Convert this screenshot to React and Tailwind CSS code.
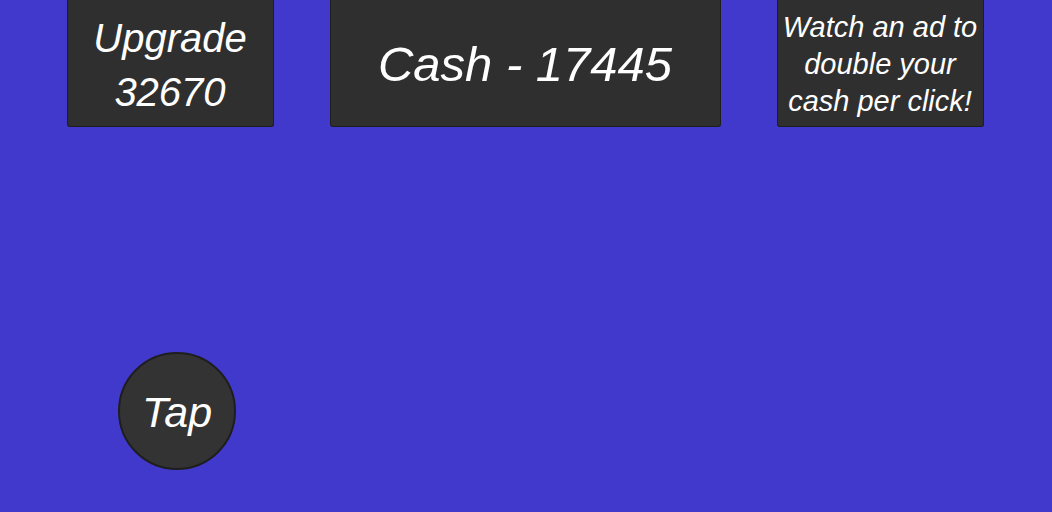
export default function App() {
  const font = { fontFamily: '"Comic Sans MS", "Liberation Sans", "DejaVu Sans", sans-serif' }
  return (
    <div className="h-[512px] w-full overflow-hidden bg-[#4139cc] text-white italic" style={font}>
      <div className="flex justify-center gap-[56px] pr-[2px]">
        <div className="flex h-[127px] w-[207px] flex-col items-center justify-center rounded-b-[3px] border border-t-0 border-[#1e1e1e] bg-[#2f2f2f] pt-[4px] text-[40px] leading-[54px]">
          <span>Upgrade</span>
          <span>32670</span>
        </div>
        <div className="flex h-[127px] w-[391px] items-center justify-center rounded-b-[3px] border border-t-0 border-[#1e1e1e] bg-[#2f2f2f] pt-[3px] text-[49px]">
          Cash - 17445
        </div>
        <div className="flex h-[127px] w-[207px] flex-col items-center justify-center rounded-b-[3px] border border-t-0 border-[#1e1e1e] bg-[#2f2f2f] pt-[2px] text-[29px] leading-[37px]">
          <span>Watch an ad to</span>
          <span>double your</span>
          <span>cash per click!</span>
        </div>
      </div>
      <div className="ml-[118px] mt-[225px] flex h-[118px] w-[118px] items-center justify-center rounded-full border-2 border-[#1e1e1e] bg-[#333333] pt-[2px] text-[43px]">
        Tap
      </div>
    </div>
  )
}
